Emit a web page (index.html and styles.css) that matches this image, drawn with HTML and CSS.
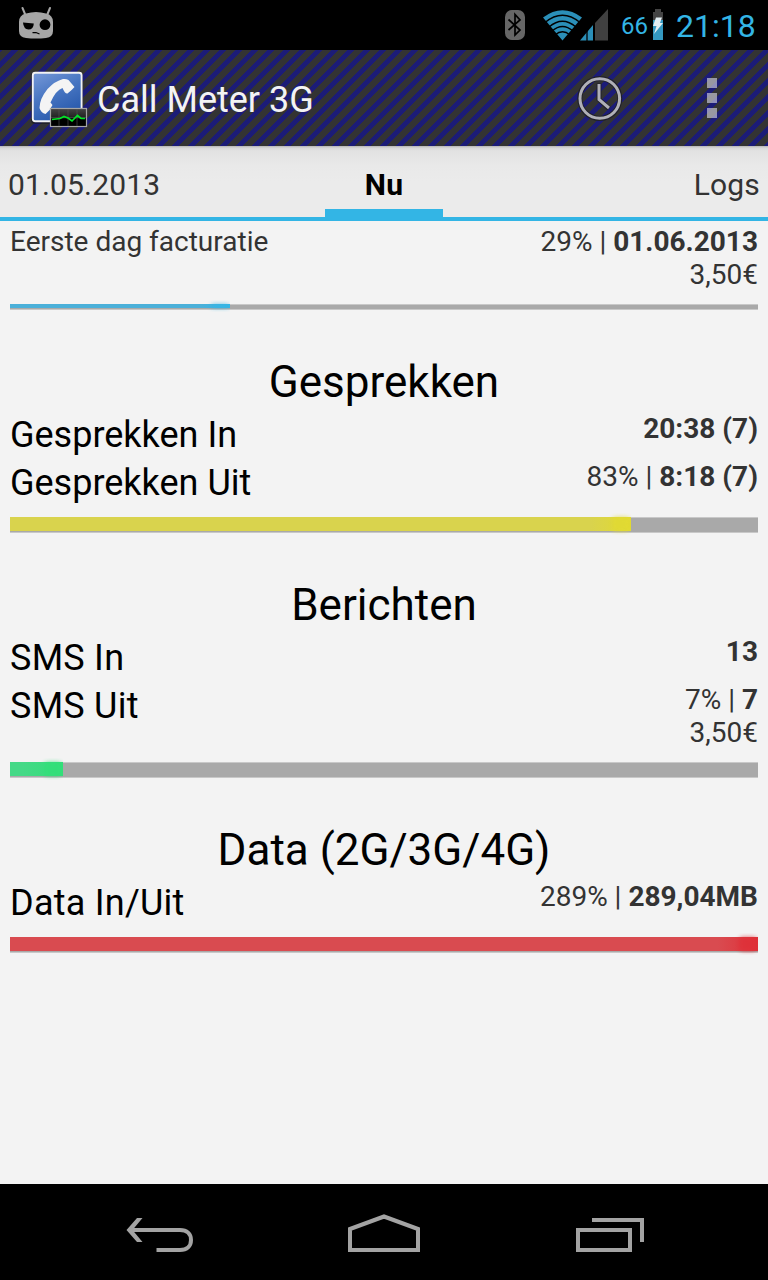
FILE: index.html
```
<!DOCTYPE html>
<html lang="nl">
<head>
<meta charset="utf-8">
<title>Call Meter 3G</title>
<link rel="stylesheet" href="styles.css">
</head>
<body>
<div class="screen">
  <header class="status">
    <svg class="cid" width="36" height="34" viewBox="0 0 36 34">
      <path d="M4.500 2 7 8M32 2 29.500 8" stroke="#a6a6a6" stroke-width="2" stroke-linecap="round"/>
      <path d="M8 7.500Q18 4.500 28 7.500Q35 9 35 16V25Q35 31 28 32Q18 33 8 32Q1 31 1 25V16Q1 9 8 7.500Z" fill="#a6a6a6"/>
      <circle cx="27" cy="18.700" r="5.400"/>
      <path d="M5 16.500 15.800 17.500Q15.500 23.500 10.500 23.500Q5.500 23 5 16.500Z"/>
      <path d="M14.500 26.700 18 26.500 21.500 28" fill="none" stroke="#000" stroke-width="1.200"/>
    </svg>
    <svg class="bt" width="20" height="32" viewBox="0 0 20 32">
      <rect width="20" height="30" y="1" rx="7" ry="7" fill="#666"/>
      <path d="M3.500 10.500 15 21 10 26V5.500L15 11 3.500 21" fill="none" stroke="#000" stroke-width="1.700"/>
    </svg>
    <svg class="signal" width="66" height="32" viewBox="0 0 66 32">
      <path d="M0 8.500Q19.500-6 39 8.500L19.500 31.500Z" fill="#2b8fb8"/>
      <g fill="none" stroke="#000" stroke-width="1.400"><path d="M2 13.500Q19.500-1 37 13.500"/><path d="M6 18Q19.500 6.500 33 18"/><path d="M9 22Q19.500 13 30 22"/><path d="M12 26Q19.500 19.500 27 26"/></g>
      <path d="M37 31.500 50 16V31.500Z" fill="#2b8fb8"/><path d="M44 15V32" stroke="#000" stroke-width="1.300"/>
      <path d="M52 31.500V14L65 0V31.500Z" fill="#404040"/>
    </svg>
    <span class="pct">66</span>
    <svg class="battery" width="10" height="31" viewBox="0 0 10 31">
      <path d="M2 0H8V3H10V11H0V3H2Z" fill="#444"/><rect y="11" width="10" height="20" fill="#3498c0"/>
      <path d="M3 8.500H9L7 14H10L1 25 3.500 17H0Z" fill="#e3eef2"/>
    </svg>
    <span class="time">21:18</span>
  </header>
  <div class="actionbar">
    <svg class="logo" width="60" height="60" viewBox="0 0 60 60">
      <defs>
        <linearGradient id="blue" x1="0" y1="0" x2=".5" y2="1"><stop stop-color="#7799d8"/><stop offset=".5" stop-color="#4876c2"/><stop offset="1" stop-color="#2859ac"/></linearGradient>
        <linearGradient id="meter" x1="0" y1="0" x2="0" y2="1"><stop stop-color="#444"/><stop offset=".5" stop-color="#222"/><stop offset=".6" stop-color="#000"/></linearGradient>
      </defs>
      <rect x="1" y="2" width="52" height="52" rx="4" fill="#161625" opacity=".6"/>
      <rect x="2.800" y="2.800" width="48.800" height="48.400" rx="2.500" fill="url(#blue)" stroke="#f1f1f3" stroke-width="1.900"/>
      <path d="M33 9Q36 8.500 38.500 10L44.500 17Q42 20 37.500 23.500Q35 24 32.500 18Q26 20 20.500 32.500Q21.500 33.500 22.500 35Q20.500 40 15.500 44Q11 43 9.500 38Q9.500 29 17.500 19Q25 11 33 9Z" fill="#f4f4f4"/>
      <rect x="20.500" y="38.500" width="36" height="18" fill="url(#meter)" stroke="#a5a5a5" stroke-width="1.200"/>
      <path d="M29 39V56M38 39V56M47 39V56M21 47.500H56" stroke="#555" stroke-width=".6"/>
      <path d="M22 49.500 30 48.500 34 46.500 38 48 42 51 47.500 45.500 51 48.500 55 48.500" fill="none" stroke="#00e626" stroke-width="1.700"/>
    </svg>
    <h1 class="title">Call Meter 3G</h1>
    <svg class="clock" width="46" height="46" viewBox="0 0 46 46">
      <circle cx="22.800" cy="23.500" r="20" fill="none" stroke="#20202a" stroke-width="5"/>
      <path d="M22 8.500V24.500L32 33.500" fill="none" stroke="#20202a" stroke-width="5"/>
      <circle cx="22.800" cy="23.500" r="19.800" fill="none" stroke="#b0b0b7" stroke-width="3"/>
      <path d="M22 9V24.500L32 33" fill="none" stroke="#b0b0b7" stroke-width="3"/>
    </svg>
    <div class="overflow"><i></i><i></i><i></i></div>
  </div>
  <nav class="tabs">
    <span class="tab">01.05.2013</span>
    <span class="tab active"><b>Nu</b></span>
    <span class="tab last">Logs</span>
  </nav>
  <main class="content">
    <div class="row bill"><span class="small">Eerste dag facturatie</span><span class="value">29% | <b>01.06.2013</b><br>3,50€</span></div>
    <div class="bar thin blue"><div class="fill" style="width:220px"></div></div>
    <h2>Gesprekken</h2>
    <div class="row"><span class="label">Gesprekken In</span><span class="value"><b>20:38 (7)</b></span></div>
    <div class="row"><span class="label">Gesprekken Uit</span><span class="value">83% | <b>8:18 (7)</b></span></div>
    <div class="bar yellow"><div class="fill" style="width:621px"></div></div>
    <h2>Berichten</h2>
    <div class="row"><span class="label loose">SMS In</span><span class="value"><b>13</b></span></div>
    <div class="row tall"><span class="label loose">SMS Uit</span><span class="value">7% | <b>7</b><br>3,50€</span></div>
    <div class="bar green"><div class="fill" style="width:53px"></div></div>
    <h2>Data (2G/3G/4G)</h2>
    <div class="row"><span class="label loose">Data In/Uit</span><span class="value">289% | <b>289,04MB</b></span></div>
    <div class="bar red"><div class="fill" style="width:748px"></div></div>
  </main>
  <footer class="nav">
    <svg width="768" height="96" viewBox="0 0 768 96" fill="none" stroke="#a3a3a3" stroke-width="4">
      <path d="M132 46H180C187 46 191 50 191 56S187 66 180 66H156.500"/>
      <path d="M137 34H142.500L132.500 46 142.500 58H137L126.500 46Z" fill="#a3a3a3" stroke="none"/>
      <path d="M350 66V45L384 32.500 418 45V66Z"/>
      <path d="M578 46H630V66H578ZM592 36H642V58"/>
    </svg>
  </footer>
</div>
</body>
</html>
```
FILE: styles.css
```
body { margin: 0; background: #f3f3f3; font-family: Roboto, "Noto Sans", sans-serif; color: #333; }
.screen { width: 768px; height: 1280px; display: flex; flex-direction: column; overflow: hidden; }
.status { height: 50px; background: #000; color: #33b5e5; display: flex; box-sizing: border-box; padding-left: 18px; align-items: flex-start; flex: none; }
.status svg { flex: none; }
.cid { margin-top: 6px; }
.bt { margin: 9px 0 0 451px; }
.signal { margin: 9px 0 0 18px; }
.pct { font-size: 24px; line-height: 52px; width: 27px; margin-left: 12px; }
.battery { margin: 9px 0 0 5px; }
.time { font-size: 32px; line-height: 52px; margin-left: 13px; white-space: nowrap; }
.actionbar { height: 96px; flex: none; display: flex; align-items: center; background: repeating-linear-gradient(135deg, #1c1c77 0 1.77px, #333 1.77px 8.13px, #1c1c77 8.13px 11.314px); }
.logo { margin: 3px 0 0 30px; }
.title { margin: 4px 0 0 7px; width: 479px; font-size: 36px; font-weight: 400; color: #f3f3f3; white-space: nowrap; }
.clock { flex: none; margin-left: 1px; }
.overflow { display: flex; flex-direction: column; gap: 5px; margin-left: 84px; }
.overflow i { width: 10px; height: 10px; background: rgba(200, 200, 215, .68); }
.tabs { height: 75px; flex: none; box-sizing: border-box; display: grid; grid-template-columns: 325px 118px 325px; background: linear-gradient(#b5b5b5, #d8d8d8 2px, #e2e2e2 5px, #e9e9e9 20px, #ebebeb 36px); border-bottom: 4px solid #33b5e5; font-size: 30px; line-height: 78px; }
.tab { height: 71px; box-sizing: border-box; padding: 0 8px; overflow: hidden; letter-spacing: .15px; }
.active { border-bottom: 8px solid #33b5e5; text-align: center; color: #000; }
.last { text-align: right; }
.content { flex: 1; padding: 4px 10px 0; }
.row { display: flex; justify-content: space-between; height: 48px; }
.bill { height: 79px; }
.tall { height: 70px; }
.small, .value { font-size: 28px; line-height: 33px; white-space: nowrap; }
.value { text-align: right; }
.label { font-size: 36px; line-height: 46px; color: #000; white-space: nowrap; }
.loose { letter-spacing: .25px; }
.bar { height: 16px; margin-top: 9px; background: #a9a9a9; border-top: 1px solid #c8c8c8; border-bottom: 1px solid #c8c8c8; box-sizing: border-box; }
.bar .fill { height: 14px; margin-top: -1px; position: relative; }
.fill::after { content: ""; position: absolute; right: 1px; top: 0; bottom: 0; width: 18px; border-radius: 4px; background: var(--tip); filter: blur(2px); clip-path: inset(-4px -1px -4px -12px); opacity: .75; }
.thin { height: 6px; margin-top: 0; }
.thin .fill { height: 4px; }
.blue { --tip: #33b5e5; }
.yellow { --tip: #e1da32; }
.green { --tip: #32df79; }
.red { --tip: #df3038; }
.blue .fill { background: linear-gradient(to left, #33b5e5, #4bb0d9 30px); }
.yellow .fill { background: linear-gradient(to left, #e1da32, #d9d34d 40px); }
.green .fill { background: linear-gradient(to left, #32df79, #45d987 40px); }
.red .fill { background: linear-gradient(to left, #df3038, #d94b50 40px); }
h2 { margin: 45px 0 0; height: 57px; font-size: 44px; line-height: 55px; font-weight: 400; color: #000; text-align: center; }
.nav { height: 96px; background: #000; flex: none; }
.nav svg { display: block; }
```
